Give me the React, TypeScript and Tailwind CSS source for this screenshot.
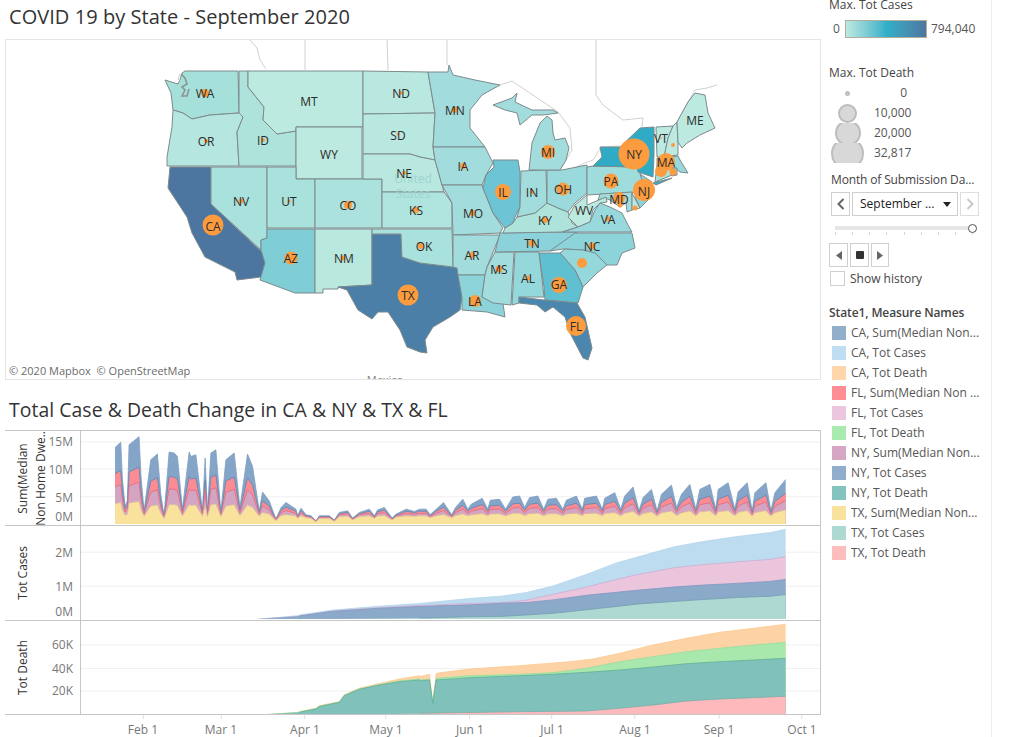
const font = { fontFamily: '"Open Sans", "Noto Sans", sans-serif' };

const states: [string, string][] = [
  ["#a6e0da", "185,71 238,71 239,113 210,115 192,119 183,113 173,110 171,93 165,80 178,84 180,80 182,73"],
  ["#b5e6df", "173,110 183,113 192,119 210,115 239,113 243,117 237,132 239,166 167,166 167,157 172,127"],
  ["#4c759f", "170,167 211,167 211,204 263,253 265,263 261,277 237,280 235,272 205,257 192,233 187,217 168,188"],
  ["#a9e1dc", "211,167 267,167 267,238 261,240 261,250 211,204"],
  ["#aee3dc", "239,71 248,71 248,87 264,107 263,120 277,134 296,131 296,166 239,166 237,132 243,117 239,113"],
  ["#bceae0", "248,71 363,71 363,127 296,127 296,131 277,134 263,120 264,107 248,87"],
  ["#bceae0", "296,127 362,127 362,179 296,179"],
  ["#a9e1dc", "267,167 296,167 296,179 315,179 315,228 267,228"],
  ["#ace2dd", "315,179 382,179 382,228 315,228"],
  ["#7fcdd5", "267,229 315,229 315,293 295,293 260,280 265,263 261,250 261,240 267,238"],
  ["#b8e8de", "315,229 372,229 372,285 338,287 338,289 323,289 323,293 315,293"],
  ["#4b7fa8", "372,234 401,234 402,257 420,263 453,267 457,268 462,297 460,310 450,317 433,327 425,340 427,353 420,352 407,347 400,330 388,312 378,312 372,319 358,310 347,290 338,287 372,285"],
  ["#b8e8df", "363,71 428,72 435,113 363,114"],
  ["#b8e8df", "363,114 435,113 433,147 435,160 420,157 410,154 363,154"],
  ["#b8e8df", "363,154 410,154 420,157 435,160 442,185 444,192 382,192 382,179 363,179"],
  ["#afe4df", "382,192 444,192 452,203 452,228 382,228"],
  ["#a9e2dd", "372,229 452,229 453,267 420,263 402,257 401,234 372,234"],
  ["#a3dcdc", "428,72 448,72 449,65 453,75 475,80 500,85 482,95 470,110 470,128 485,147 433,147 435,113"],
  ["#a3dcdc", "433,147 485,147 493,163 486,175 482,185 442,185 435,160"],
  ["#a3dcdc", "442,185 482,185 483,188 493,213 503,228 500,233 453,235 452,203"],
  ["#a3dcdc", "453,235 500,235 487,267 485,275 458,275 457,268 453,267"],
  ["#8dd4da", "458,275 485,275 482,297 502,297 505,317 487,312 462,310 462,297"],
  ["#a3dcdc", "495,252 514,252 511,305 493,303 482,297 485,275 487,267"],
  ["#95d8dc", "515,252 539,252 544,297 519,297 519,303 512,305"],
  ["#8bd2da", "500,233 562,232 577,232 575,235 550,251 495,252"],
  ["#aee3dc", "505,228 513,223 517,217 535,213 547,203 558,208 568,212 572,223 578,227 562,232 503,233"],
  ["#6cc4d4", "493,160 518,160 520,172 520,207 515,217 513,223 505,228 493,213 483,188 486,175 494,167"],
  ["#a3dcdc", "521,171 546,170 547,203 535,213 517,217 520,207"],
  ["#9ad9dc", "547,170 562,170 587,165 587,193 575,203 568,212 558,208 547,203"],
  ["#a3dcdc", "529,170 532,143 540,123 547,116 552,120 553,133 555,140 565,138 569,148 566,160 560,170"],
  ["#a3dcdc", "493,105 512,98 517,93 515,102 532,110 553,110 558,113 543,115 532,115 520,125 517,113 505,110"],
  ["#9fdcdc", "587,167 593,166 637,167 640,173 643,182 637,192 587,195"],
  ["#2fabc6", "593,166 602,157 600,147 620,147 640,128 654,127 654,155 653,177 638,172 637,167"],
  ["#2fabc6", "653,183 672,178 656,185"],
  ["#bceae0", "656,127 673,126 668,138 664,157 657,157"],
  ["#bceae0", "673,126 677,122 678,142 678,155 664,157 668,138"],
  ["#bceae0", "677,122 688,102 695,93 705,95 708,113 715,128 700,135 687,143 682,148 678,142"],
  ["#97d9dc", "657,158 678,156 680,160 688,173 680,172 675,168 657,165"],
  ["#a9e1dc", "657,165 672,168 672,175 655,182"],
  ["#8dd4da", "672,168 677,168 677,175 672,176"],
  ["#8dd4da", "640,174 652,182 650,198 640,208 635,197 643,182"],
  ["#a3dcdc", "600,194 632,192 632,210 627,212 626,203 620,207 610,200 605,198 598,200"],
  ["#b8e8df", "632,193 640,208 632,210"],
  ["#bceae0", "587,195 587,205 606,197 607,202 600,203 593,210 590,222 578,227 568,217 575,205"],
  ["#97d9dc", "563,232 578,227 590,222 595,210 600,203 610,207 622,213 628,225 632,232"],
  ["#8dd4da", "575,233 632,233 635,248 622,253 617,265 607,265 595,253 583,250 563,249 550,251"],
  ["#95d8dc", "560,253 565,249 583,250 595,253 607,265 597,273 583,287 575,270"],
  ["#5fc0d2", "539,253 560,253 575,270 583,287 578,303 545,300 544,287"],
  ["#4a86ad", "519,297 544,300 577,303 585,317 592,348 588,360 583,358 570,333 565,317 553,307 545,312 537,305 519,303"],
];

const borders = [
  "305,40 305,70",
  "387,40 388,70",
  "250,40 257,48 260,60 266,69",
  "447,40 447,65",
  "596,40 596,95 603,105 623,120 643,118 642,127",
  "500,85 512,81 558,112 570,128 572,150 560,170 565,172 585,163 593,160 601,147 620,146",
  "677,122 688,102 695,90 707,88 717,85",
];

const dots: [number, number, number][] = [
  [205, 93, 4], [206, 141, 2], [263, 140, 2], [309, 101, 1], [401, 93, 2], [398, 134, 1.5],
  [404, 173, 2], [348, 205, 4], [289, 201, 1.5], [241, 201, 2.5], [213, 225, 10.5], [291, 258, 6.5],
  [343, 258, 2.5], [408, 295, 10.5], [416, 210, 3], [421, 246, 3], [455, 110, 3], [463, 166, 3],
  [473, 213, 3], [472, 255, 3], [475, 301, 6], [499, 269, 3.5], [528, 278, 2.5], [532, 243, 3.5],
  [545, 220, 3], [503, 192, 8], [532, 192, 2], [563, 189, 6.5], [548, 152, 7], [611, 181, 7.5],
  [634, 154, 15.5], [644, 190, 11], [619, 198, 6], [620, 205, 2.5], [635, 208, 2.5], [666, 162, 9],
  [661, 171, 6], [673, 172, 3.5], [673, 145, 2], [608, 219, 2.5], [592, 246, 3.5], [582, 263, 5],
  [559, 285, 8], [576, 326, 10], [661, 138, 0.8], [584, 210, 0.8],
];

const labels: [string, number, number][] = [
  ["WA", 205, 93], ["OR", 206, 141], ["ID", 263, 140], ["MT", 309, 101], ["ND", 401, 93], ["SD", 398, 135],
  ["WY", 329, 154], ["NE", 404, 173], ["CO", 348, 205], ["UT", 289, 201], ["NV", 241, 201], ["CA", 213, 226],
  ["AZ", 291, 258], ["NM", 344, 258], ["TX", 408, 295], ["KS", 416, 210], ["OK", 424, 246], ["MN", 455, 110],
  ["IA", 463, 166], ["MO", 473, 213], ["AR", 472, 255], ["LA", 475, 301], ["MS", 499, 269], ["AL", 528, 278],
  ["TN", 532, 243], ["KY", 545, 220], ["IL", 503, 192], ["IN", 532, 192], ["OH", 563, 189], ["MI", 548, 152],
  ["WV", 584, 210], ["VA", 608, 219], ["NC", 592, 246], ["GA", 559, 284], ["FL", 576, 326], ["PA", 611, 181],
  ["NY", 634, 154], ["NJ", 644, 191], ["MD", 619, 199], ["VT", 661, 138], ["MA", 666, 162], ["ME", 695, 120],
];

function UsMap() {
  return (
    <svg viewBox="6 40 814 339" className="h-full w-full" style={font}>
      {borders.map((p, i) => (
        <polyline key={i} points={p} fill="none" stroke="#c4c4c4" strokeWidth="0.8" />
      ))}
      {states.map(([fill, p], i) => (
        <polygon key={i} points={p} fill={fill} stroke="#7d8a8c" strokeWidth="1" strokeLinejoin="round" />
      ))}
      {/* puget sound */}
      <path d="M181 74l4 4 2 6-5 3 3 3-3 6 5 0 2-7" fill="none" stroke="#8a9494" strokeWidth="1.6" />
      <path d="M180 74l-2 5 3 2" fill="none" stroke="#c9c9c9" strokeWidth="1" />
      <text x="413" y="183" textAnchor="middle" fontSize="12" fill="#9fd4cf">United</text>
      <text x="413" y="198" textAnchor="middle" fontSize="12" fill="#9fd4cf">States</text>
      {dots.map(([x, y, r], i) => (
        <circle key={i} cx={x} cy={y} r={r} fill="#fd9c3f" />
      ))}
      {labels.map(([t, x, y]) => (
        <text key={t} x={x} y={y + 4.5} textAnchor="middle" fontSize="12" fill="#2b2b2b">{t}</text>
      ))}
      <text x="385" y="384" textAnchor="middle" fontSize="11" fill="#888">Mexico</text>
    </svg>
  );
}

type Pt = [number, number];
// points read off the zoomed picture: left half and right half of the chart
const L = (pts: number[][]): Pt[] => pts.map(([x, y]) => [x / 3, 395 + y / 3]);
const R = (pts: number[][]): Pt[] => pts.map(([x, y]) => [420 + x / 3, 395 + y / 3]);
const path = (pts: Pt[]) => pts.map(([x, y]) => `${x.toFixed(1)},${y.toFixed(1)}`).join(" ");

const dwellTop: Pt[] = [
  ...L([[348, 390], [348, 158], [365, 142], [370, 250], [378, 335], [385, 320], [390, 150], [420, 125], [426, 250], [435, 350], [455, 195], [475, 178], [485, 300], [495, 365], [510, 172], [525, 175], [535, 185], [550, 345], [570, 172], [575, 185], [590, 180], [610, 350], [618, 190], [625, 355], [635, 175], [650, 165], [665, 355], [680, 195], [705, 175], [722, 340], [745, 178], [760, 215], [780, 350], [790, 293], [810, 320], [830, 375], [845, 340], [860, 325], [890, 345], [895, 365], [905, 342], [920, 362], [935, 365], [950, 380], [960, 365], [990, 365], [1005, 378], [1020, 355], [1045, 350], [1060, 372], [1080, 355], [1110, 345], [1125, 365], [1135, 347], [1155, 340], [1178, 372], [1190, 360], [1220, 345], [1245, 352]]),
  ...R([[0, 345], [20, 345], [32, 362], [50, 345], [72, 325], [97, 362], [108, 340], [130, 315], [145, 345], [155, 330], [188, 312], [205, 345], [212, 318], [240, 315], [258, 345], [280, 308], [300, 305], [315, 340], [330, 310], [355, 305], [372, 345], [385, 315], [410, 312], [430, 345], [440, 318], [470, 305], [488, 345], [495, 312], [530, 305], [548, 345], [555, 312], [585, 295], [603, 345], [615, 305], [640, 278], [658, 350], [670, 310], [695, 285], [712, 350], [725, 300], [755, 272], [770, 340], [785, 300], [810, 270], [828, 345], [840, 285], [870, 270], [888, 345], [895, 285], [925, 265], [945, 345], [955, 292], [982, 265], [997, 350], [1005, 295], [1038, 265], [1053, 350], [1065, 295], [1097, 255], [1097, 390]]),
];

// the lower bands stay thicker in the weekly dips, so not a plain fraction of the total
const band = (a: number, b: number, cap: number): Pt[] =>
  dwellTop.map(([x, y]) => {
    const h = 525 - y;
    return [x, 525 - Math.min(a + b * h, cap * h)];
  });

type Layer = { pts: Pt[]; fill: string; line: string };

const dwell: Layer[] = [
  { pts: dwellTop, fill: "#84a5c8", line: "#7d9ec2" },
  { pts: band(3.7, 0.61, 0.9), fill: "#fb8c93", line: "#5f86b2" },
  { pts: band(4.3, 0.43, 0.8), fill: "#d3a5c2", line: "#e0697f" },
  { pts: band(5.3, 0.2, 0.7), fill: "#f9e29c", line: "#d9b9a0" },
];

const cases: Layer[] = [
  { pts: [...L([[770, 675], [900, 663], [1000, 648], [1130, 637], [1260, 628]]), ...R([[150, 613], [250, 605], [320, 595], [400, 575], [500, 540], [590, 505], [650, 488], [760, 457], [850, 440], [950, 425], [1050, 413], [1097, 403], [1097, 675]])], fill: "#bedcf0", line: "#b2d4ec" },
  { pts: [...L([[770, 675], [900, 665], [1000, 651], [1130, 641], [1260, 634]]), ...R([[150, 628], [250, 625], [320, 618], [400, 600], [500, 578], [590, 555], [650, 541], [760, 520], [850, 510], [950, 502], [1050, 494], [1097, 486], [1097, 675]])], fill: "#ebc5dc", line: "#c9aed5" },
  { pts: [...L([[770, 675], [900, 666], [1000, 652], [1130, 643], [1260, 637]]), ...R([[150, 632], [250, 627], [320, 625], [400, 617], [500, 603], [590, 594], [650, 588], [760, 578], [850, 572], [950, 567], [1050, 561], [1097, 555], [1097, 675]])], fill: "#8ba9c8", line: "#8098c2" },
  { pts: [...L([[1000, 675], [1260, 672]]), ...R([[150, 668], [250, 667], [400, 658], [500, 647], [590, 637], [650, 630], [760, 622], [850, 616], [950, 610], [1050, 606], [1097, 601], [1097, 675]])], fill: "#aed8d2", line: "#6f9fae" },
];

const deaths: Layer[] = [
  { pts: [...L([[790, 958], [900, 950], [950, 940], [960, 932], [1020, 920], [1035, 899], [1080, 880], [1130, 868], [1200, 852], [1260, 842]]), ...R([[0, 845], [30, 838], [40, 925], [50, 835], [150, 822], [300, 812], [450, 800], [520, 792], [600, 775], [700, 750], [800, 730], [900, 712], [1000, 700], [1097, 688], [1097, 958]])], fill: "#fdd3a5", line: "#fbc88f" },
  { pts: [...L([[790, 958], [900, 951], [950, 941], [960, 934], [1020, 921], [1035, 901], [1080, 882], [1130, 871], [1200, 858], [1260, 852]]), ...R([[0, 855], [30, 853], [40, 925], [50, 850], [150, 842], [300, 838], [400, 833], [500, 820], [600, 800], [700, 785], [800, 770], [900, 760], [1000, 750], [1097, 742], [1097, 958]])], fill: "#a9e8ad", line: "#96dc9f" },
  { pts: [...L([[800, 958], [900, 952], [950, 942], [960, 935], [1020, 922], [1035, 902], [1080, 883], [1130, 872], [1200, 860], [1260, 855]]), ...R([[0, 858], [30, 855], [40, 925], [50, 855], [150, 848], [300, 842], [400, 838], [500, 832], [600, 825], [700, 816], [800, 806], [900, 800], [1000, 795], [1097, 790], [1097, 958]])], fill: "#80c1bc", line: "#5fb094" },
  { pts: [...L([[1100, 958], [1260, 956]]), ...R([[0, 955], [300, 950], [500, 948], [600, 940], [700, 930], [800, 918], [900, 912], [1000, 908], [1097, 904], [1097, 958]])], fill: "#feb9bd", line: "#79aea8" },
];

const xGrid = [143, 221, 305, 386, 470, 552, 635, 719, 802];
const months = ["Feb 1", "Mar 1", "Apr 1", "May 1", "Jun 1", "Jul 1", "Aug 1", "Sep 1", "Oct 1"];

function Plot({ top, height, grid, layers }: { top: number; height: number; grid: number[]; layers: Layer[] }) {
  return (
    <svg viewBox={`82 ${top} 738 ${height}`} className="h-full min-w-0 flex-1" preserveAspectRatio="none">
      {grid.map((y) => (
        <line key={y} x1="82" x2="820" y1={y} y2={y} stroke="#f0f0f0" />
      ))}
      {layers.map((l, i) => (
        <g key={i}>
          <polygon points={path(l.pts)} fill={l.fill} />
          <polyline points={path(l.pts.slice(1, -1))} fill="none" stroke={l.line} strokeWidth="0.8" />
        </g>
      ))}
    </svg>
  );
}

function ChartRow({
  title,
  ticks,
  top,
  height,
  layers,
  last,
}: {
  title: string[];
  ticks: [string, number][];
  top: number;
  height: number;
  layers: Layer[];
  last?: boolean;
}) {
  return (
    <div className={`flex border-[#c6c6c6] ${last ? "" : "border-b"}`} style={{ height }}>
      <div className="relative flex w-[76px] shrink-0 items-center justify-start overflow-hidden border-r border-[#c6c6c6] pl-[9px]">
        <div className="flex rotate-180 flex-col text-center text-[12px] leading-[18px] text-[#333] [writing-mode:vertical-rl]">
          {title.map((t) => (
            <span key={t} className="whitespace-nowrap">{t}</span>
          ))}
        </div>
        {ticks.map(([t, y]) => (
          <span
            key={t}
            className="absolute right-[7px] -translate-y-1/2 text-[12px] leading-none text-[#777]"
            style={{ top: y - top }}
          >
            {t}
          </span>
        ))}
      </div>
      <Plot top={top} height={height} layers={layers} grid={ticks.map(([, y]) => y).filter((y) => y < top + height - 12)} />
    </div>
  );
}

const legend: [string, string][] = [
  ["#91aeca", "CA, Sum(Median Non..."],
  ["#bfdef2", "CA, Tot Cases"],
  ["#ffd6ab", "CA, Tot Death"],
  ["#fe8d96", "FL, Sum(Median Non ..."],
  ["#ebc6dc", "FL, Tot Cases"],
  ["#a9ebae", "FL, Tot Death"],
  ["#d5a7c4", "NY, Sum(Median Non..."],
  ["#90adcc", "NY, Tot Cases"],
  ["#84c4bf", "NY, Tot Death"],
  ["#f9e39c", "TX, Sum(Median Non..."],
  ["#aed8d2", "TX, Tot Cases"],
  ["#ffbcbc", "TX, Tot Death"],
];

const sizes: [string, string][] = [
  ["0", "h-[5px] w-[5px] border-0 bg-[#b5b5b5]"],
  ["10,000", "h-[19px] w-[19px]"],
  ["20,000", "h-[26px] w-[26px] shrink-0"],
  ["32,817", "h-[33px] w-[33px] shrink-0"],
];

function Sidebar() {
  return (
    <div className="flex h-full w-[171px] shrink-0 flex-col border-r border-[#eeeeee] text-[12px] text-[#555]">
      <div className="-mt-[1px] pl-[8px] leading-[12px] text-[#444]">Max. Tot Cases</div>
      <div className="mt-[9px] flex h-[18px] items-center pl-[12px]">
        <span className="w-[12px]">0</span>
        <div className="h-[18px] w-[82px] border border-[#b3ae9a] bg-gradient-to-r from-[#bceae0] via-[#2fb0c9] to-[#4c76a0]" />
        <span className="ml-[4px]">794,040</span>
      </div>
      <div className="mt-[27px] pl-[8px] leading-[16px] text-[#444]">Max. Tot Death</div>
      <div className="mt-[2px] flex flex-col">
        {sizes.map(([t, cls]) => (
          <div key={t} className="flex h-[20px] items-center overflow-hidden">
            <div className="flex w-[53px] justify-center">
              <div className={`rounded-full border-2 border-[#bdbdbd] bg-[#d8d8d8] ${cls}`} />
            </div>
            <span className="w-[33px] text-right">{t}</span>
          </div>
        ))}
      </div>
      <div className="mt-[9px] truncate pl-[10px] leading-[16px] tracking-[-0.15px] text-[#444]">Month of Submission Da...</div>
      <div className="mt-[4px] flex h-[24px] gap-[2px] pl-[10px]">
        <div className="flex w-[19px] items-center justify-center border border-[#cfcfcf] text-[#555]">
          <svg width="8" height="12" viewBox="0 0 8 12"><path d="M6.5 1 1.5 6l5 5" fill="none" stroke="#666" strokeWidth="2" /></svg>
        </div>
        <div className="flex w-[106px] items-center justify-between border border-[#cfcfcf] pl-[7px] pr-[6px] font-medium text-[#222]">
          <span className="leading-none">September ...</span>
          <svg width="8" height="5" viewBox="0 0 8 5"><path d="M0 0h8L4 5z" fill="#222" /></svg>
        </div>
        <div className="flex w-[19px] items-center justify-center border border-[#dedede]">
          <svg width="8" height="12" viewBox="0 0 8 12"><path d="M1.5 1l5 5-5 5" fill="none" stroke="#c8c8c8" strokeWidth="2" /></svg>
        </div>
      </div>
      <div className="relative mt-[10px] ml-[14px] h-[4px] w-[142px] bg-[#e6e6e6]">
        <div className="absolute -top-[2.5px] right-0 h-[9px] w-[9px] rounded-full border border-[#555] bg-white" />
      </div>
      <div className="mt-[2px] ml-[14px] flex w-[138px] justify-between">
        {months.map((m) => (
          <div key={m} className="h-[3px] w-px bg-[#d5d5d5]" />
        ))}
      </div>
      <div className="mt-[8px] flex h-[24px] gap-[2px] pl-[8px]">
        <div className="flex w-[19px] items-center justify-center border border-[#cfcfcf]">
          <svg width="6" height="9" viewBox="0 0 6 9"><path d="M6 0v9L0 4.5z" fill="#666" /></svg>
        </div>
        <div className="flex w-[19px] items-center justify-center border border-[#cfcfcf]">
          <div className="h-[8px] w-[8px] rounded-[1px] bg-[#333]" />
        </div>
        <div className="flex w-[18px] items-center justify-center border border-[#cfcfcf]">
          <svg width="6" height="9" viewBox="0 0 6 9"><path d="M0 0v9l6-4.5z" fill="#666" /></svg>
        </div>
      </div>
      <div className="mt-[4px] flex h-[15px] items-center pl-[9px]">
        <div className="h-[15px] w-[15px] border border-[#cfcfcf]" />
        <span className="ml-[5px] text-[#444]">Show history</span>
      </div>
      <div className="mt-[19px] pl-[8px] font-semibold leading-[16px] tracking-[-0.1px] text-[#444]">State1, Measure Names</div>
      <div className="mt-[2px] flex flex-col">
        {legend.map(([c, t]) => (
          <div key={t} className="flex h-[20px] items-center pl-[11px]">
            <div className="h-[14px] w-[14px] shrink-0" style={{ backgroundColor: c }} />
            <span className="ml-[5px] whitespace-nowrap">{t}</span>
          </div>
        ))}
      </div>
    </div>
  );
}

export default function App() {
  return (
    <div className="flex h-[737px] w-[1010px] overflow-hidden bg-white" style={font}>
      <div className="ml-[5px] flex w-[816px] shrink-0 flex-col">
        <div className="flex h-[39px] items-center pl-[4px] pb-[4px] text-[20px] tracking-[0.05px] text-[#333]">
          COVID 19 by State - September 2020
        </div>
        <div className="relative h-[341px] border border-[#e4e4e4]">
          <UsMap />
          <div className="absolute bottom-[3px] left-[3px] text-[11px] leading-none text-[#6b6b6b]">
            © 2020 Mapbox&nbsp; © OpenStreetMap
          </div>
        </div>
        <div className="flex h-[51px] items-center pl-[4px] pt-[10px] text-[19.4px] tracking-[0.05px] text-[#333]">
          Total Case &amp; Death Change in CA &amp; NY &amp; TX &amp; FL
        </div>
        <div className="border-x-0 border-y border-r border-[#c6c6c6]">
          <ChartRow
            title={["Sum(Median", "Non Home Dwe.."]}
            top={431}
            height={95}
            layers={dwell}
            ticks={[["15M", 442], ["10M", 469.5], ["5M", 497.5], ["0M", 517]]}
          />
          <ChartRow
            title={["Tot Cases"]}
            top={526}
            height={95}
            layers={cases}
            ticks={[["2M", 552.5], ["1M", 587], ["0M", 612]]}
          />
          <ChartRow
            title={["Tot Death"]}
            top={621}
            height={93}
            layers={deaths}
            ticks={[["60K", 645], ["40K", 668.5], ["20K", 691]]}
            last
          />
        </div>
        <div className="relative h-[22px]">
          {months.map((m, i) => (
            <div key={m} className="absolute top-0 flex -translate-x-1/2 flex-col items-center" style={{ left: xGrid[i] - 5 }}>
              <div className="h-[4px] w-px bg-[#e0e0e0]" />
              <span className="mt-[5px] whitespace-nowrap text-[12px] leading-none text-[#777]">{m}</span>
            </div>
          ))}
        </div>
      </div>
      <Sidebar />
    </div>
  );
}
